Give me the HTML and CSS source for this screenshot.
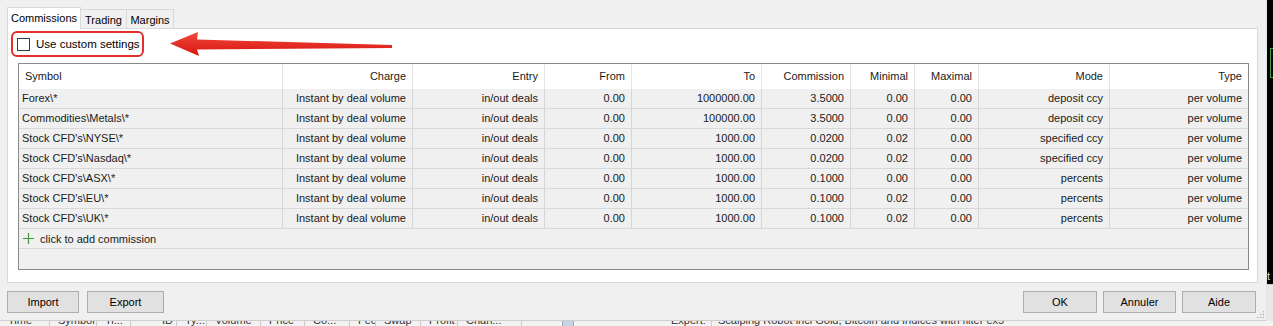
FILE: index.html
```html
<!DOCTYPE html>
<html>
<head>
<meta charset="utf-8">
<link rel="stylesheet" href="styles.css">
</head>
<body>
<div class="screen">
  <div class="top">
    <div class="dialog">
      <div class="tabs">
        <div class="tab tab-active w-comm">Commissions</div>
        <div class="tab w-trad">Trading</div>
        <div class="tab w-marg">Margins</div>
      </div>
      <div class="panel">
        <div class="opt-row">
          <label class="highlight">
            <span class="checkbox"></span>
            <span class="opt-label">Use custom settings</span>
          </label>
          <svg class="arrow" width="226" height="28" viewBox="0 0 226 28">
            <defs>
              <linearGradient id="ag" x1="0" y1="0" x2="0" y2="1">
                <stop offset="0" stop-color="#f04a3e"/>
                <stop offset="1" stop-color="#d9140e"/>
              </linearGradient>
            </defs>
            <polygon points="2,13.5 30,2 29,9.5 224,15 224,18 29,19.5 31,26" fill="url(#ag)"/>
          </svg>
        </div>
        <div class="grid">
          <div class="row head">
            <div class="c l hp">Symbol</div>
            <div class="c">Charge</div>
            <div class="c">Entry</div>
            <div class="c">From</div>
            <div class="c">To</div>
            <div class="c">Commission</div>
            <div class="c">Minimal</div>
            <div class="c">Maximal</div>
            <div class="c">Mode</div>
            <div class="c">Type</div>
          </div>
          <div class="row">
            <div class="c l">Forex\*</div><div class="c">Instant by deal volume</div><div class="c">in/out deals</div><div class="c">0.00</div><div class="c">1000000.00</div><div class="c">3.5000</div><div class="c">0.00</div><div class="c">0.00</div><div class="c">deposit ccy</div><div class="c">per volume</div>
          </div>
          <div class="row">
            <div class="c l">Commodities\Metals\*</div><div class="c">Instant by deal volume</div><div class="c">in/out deals</div><div class="c">0.00</div><div class="c">100000.00</div><div class="c">3.5000</div><div class="c">0.00</div><div class="c">0.00</div><div class="c">deposit ccy</div><div class="c">per volume</div>
          </div>
          <div class="row">
            <div class="c l">Stock CFD's\NYSE\*</div><div class="c">Instant by deal volume</div><div class="c">in/out deals</div><div class="c">0.00</div><div class="c">1000.00</div><div class="c">0.0200</div><div class="c">0.02</div><div class="c">0.00</div><div class="c">specified ccy</div><div class="c">per volume</div>
          </div>
          <div class="row">
            <div class="c l">Stock CFD's\Nasdaq\*</div><div class="c">Instant by deal volume</div><div class="c">in/out deals</div><div class="c">0.00</div><div class="c">1000.00</div><div class="c">0.0200</div><div class="c">0.02</div><div class="c">0.00</div><div class="c">specified ccy</div><div class="c">per volume</div>
          </div>
          <div class="row">
            <div class="c l">Stock CFD's\ASX\*</div><div class="c">Instant by deal volume</div><div class="c">in/out deals</div><div class="c">0.00</div><div class="c">1000.00</div><div class="c">0.1000</div><div class="c">0.00</div><div class="c">0.00</div><div class="c">percents</div><div class="c">per volume</div>
          </div>
          <div class="row">
            <div class="c l">Stock CFD's\EU\*</div><div class="c">Instant by deal volume</div><div class="c">in/out deals</div><div class="c">0.00</div><div class="c">1000.00</div><div class="c">0.1000</div><div class="c">0.02</div><div class="c">0.00</div><div class="c">percents</div><div class="c">per volume</div>
          </div>
          <div class="row">
            <div class="c l">Stock CFD's\UK\*</div><div class="c">Instant by deal volume</div><div class="c">in/out deals</div><div class="c">0.00</div><div class="c">1000.00</div><div class="c">0.1000</div><div class="c">0.02</div><div class="c">0.00</div><div class="c">percents</div><div class="c">per volume</div>
          </div>
          <div class="add-row">
            <svg class="plus" width="11" height="11" viewBox="0 0 11 11"><path d="M5.5 0V11M0 5.5H11" stroke="#3f9a3f" stroke-width="1.2"/></svg>
            <span>click to add commission</span>
          </div>
          <div class="empty-row"></div>
        </div>
      </div>
      <div class="buttons">
        <div class="btn-group">
          <div class="btn w-imp">Import</div>
          <div class="btn w-exp">Export</div>
        </div>
        <div class="btn-group right">
          <div class="btn w-ok">OK</div>
          <div class="btn w-ann">Annuler</div>
          <div class="btn w-aide">Aide</div>
        </div>
      </div>
      <div class="grip"></div>
    </div>
    <div class="side">
      <div class="side-dark">
        <div class="side-green"></div>
        <div class="side-text">t</div>
      </div>
      <div class="side-light"></div>
    </div>
  </div>
  <div class="under">
    <div class="under-line">
      <span class="u" style="width:50px">Time</span>
      <span class="u" style="width:47px">Symbol</span>
      <span class="u" style="width:34px">Ti...</span>
      <span class="u ur" style="width:46px">ID</span>
      <span class="u" style="width:30px">Ty...</span>
      <span class="u" style="width:54px">Volume</span>
      <span class="u" style="width:44px">Price</span>
      <span class="u" style="width:45px">Co...</span>
      <span class="u" style="width:26px">Fee</span>
      <span class="u" style="width:45px">Swap</span>
      <span class="u" style="width:37px">Profit</span>
      <span class="u" style="width:64px">Chan...</span>
      <span class="u-scroll"></span>
      <span class="u-expert">Expert:</span>
      <span class="u-name">Scalping Robot incl Gold, Bitcoin and Indices with filter ex5</span>
    </div>
  </div>
</div>
</body>
</html>
```

FILE: styles.css
```css
html, body {
  margin: 0;
  padding: 0;
}
body {
  width: 1273px;
  height: 326px;
  overflow: hidden;
  background: #f0f0f0;
  font-family: "Liberation Sans", Arial, sans-serif;
  font-size: 11px;
  color: #1a1a1a;
}
.screen {
  display: flex;
  flex-direction: column;
  height: 326px;
}
.top {
  display: flex;
  height: 321px;
}
.dialog {
  position: relative;
  width: 1267px;
  height: 321px;
  box-sizing: border-box;
  padding: 7px 0 0 7px;
  background: #f0f0f0;
  border-right: 1px solid #e4e4e4;
  border-bottom: 1px solid #cfcfcf;
  display: flex;
  flex-direction: column;
}

/* tabs */
.tabs {
  display: flex;
  align-items: flex-end;
  height: 21px;
  position: relative;
  z-index: 2;
}
.tab {
  box-sizing: border-box;
  height: 19px;
  border: 1px solid #d9d9d9;
  border-bottom: none;
  background: #f0f0f0;
  display: flex;
  align-items: center;
  justify-content: center;
  font-size: 11px;
  color: #000;
  padding-top: 1px;
  white-space: nowrap;
}
.tab + .tab {
  border-left: none;
}
.tab-active {
  height: 22px;
  margin-bottom: -1px;
  background: #fff;
  padding-top: 0;
  padding-bottom: 2px;
}
.w-comm { width: 74px; }
.w-trad { width: 46px; }
.w-marg { width: 47px; }

/* panel */
.panel {
  box-sizing: border-box;
  width: 1251px;
  height: 255px;
  background: #fff;
  border: 1px solid #d9d9d9;
  padding: 2px 0 0 3px;
}
.opt-row {
  display: flex;
  align-items: flex-start;
}
.highlight {
  box-sizing: border-box;
  flex: 0 0 133px;
  width: 133px;
  height: 26px;
  border: 2px solid #e0322b;
  border-radius: 6px;
  display: flex;
  align-items: center;
  padding-left: 4px;
  white-space: nowrap;
}
.checkbox {
  box-sizing: border-box;
  flex: 0 0 13px;
  width: 13px;
  height: 13px;
  border: 1px solid #2d3f4c;
  background: #fff;
  margin-right: 6px;
}
.opt-label {
  font-size: 11.5px;
  color: #000;
  white-space: nowrap;
}
.arrow {
  display: block;
  flex: 0 0 auto;
  margin-left: 24px;
  margin-top: -1px;
}

/* grid */
.grid {
  box-sizing: border-box;
  width: 1231px;
  height: 207px;
  margin: 5px 0 0 7px;
  border: 1px solid #8a8a8a;
  background: #f0f0f0;
  display: flex;
  flex-direction: column;
}
.row {
  display: grid;
  grid-template-columns: 264px 130px 132px 87px 130px 89px 64px 64px 131px 138px;
  height: 20px;
  box-sizing: border-box;
  border-bottom: 1px solid #d9d9d9;
}
.row.head {
  height: 25px;
  background: #fff;
  border-bottom: none;
}
.c {
  box-sizing: border-box;
  border-right: 1px solid #d6d6d6;
  padding: 0 6px 0 3px;
  text-align: right;
  line-height: 19px;
  white-space: nowrap;
  overflow: hidden;
}
.c:last-child {
  border-right: none;
}
.head .c {
  line-height: 24px;
  border-right-color: #e6e6e6;
}
.c.l {
  text-align: left;
}
.c.hp {
  padding-left: 6px;
}
.add-row {
  height: 20px;
  box-sizing: border-box;
  border-bottom: 1px solid #d9d9d9;
  display: flex;
  align-items: center;
  padding-left: 4px;
}
.plus {
  display: block;
  margin-right: 6px;
}
.empty-row {
  flex: 1;
}

/* buttons */
.buttons {
  display: flex;
  justify-content: space-between;
  margin-top: 8px;
  width: 1249px;
}
.btn-group {
  display: flex;
  gap: 8px;
}
.btn-group.right {
  gap: 6px;
}
.btn {
  box-sizing: border-box;
  height: 22px;
  background: #e1e1e1;
  border: 1px solid #adadad;
  display: flex;
  align-items: center;
  justify-content: center;
  font-size: 11px;
  color: #000;
}
.w-imp { width: 72px; }
.w-exp { width: 77px; }
.w-ok { width: 74px; }
.w-ann { width: 73px; }
.w-aide { width: 74px; }

.grip {
  position: absolute;
  right: 2px;
  bottom: 2px;
  width: 8px;
  height: 8px;
  background-image: radial-gradient(circle, #b5b5b5 0.8px, transparent 1.1px);
  background-size: 3px 3px;
  clip-path: polygon(100% 0, 100% 100%, 0 100%);
}

/* right side dark strip */
.side {
  width: 6px;
  display: flex;
  flex-direction: column;
}
.side-dark {
  height: 284px;
  background: #000;
  position: relative;
  overflow: hidden;
  display: flex;
  flex-direction: column;
}
.side-green {
  margin-top: 48px;
  height: 30px;
  width: 6px;
  box-sizing: border-box;
  border-left: 1px solid #3fa040;
  border-top: 1px solid #3fa040;
  border-bottom: 1px solid #3fa040;
  margin-left: 3px;
}
.side-text {
  margin-top: auto;
  margin-bottom: 2px;
  color: #ddd;
  font-size: 11px;
  line-height: 12px;
}
.side-light {
  flex: 1;
  background: #e9e9e9;
  border-top: 1px solid #cfcfcf;
}

/* window underneath */
.under {
  height: 5px;
  overflow: hidden;
  background: #f3f3f3;
}
.under-line {
  display: flex;
  margin-top: -7px;
  height: 13px;
  line-height: 13px;
  font-size: 11px;
  color: #333;
  white-space: nowrap;
}
.u {
  box-sizing: border-box;
  border-right: 1px solid #cdcdcd;
  padding-left: 8px;
  overflow: hidden;
}
.ur {
  text-align: right;
  padding-right: 3px;
}
.u-scroll {
  width: 10px;
  margin-left: 40px;
  background: #c8d3e6;
  border: 1px solid #9aa8c0;
}
.u-expert {
  margin-left: 97px;
  width: 40px;
  border-right: 1px solid #cdcdcd;
}
.u-name {
  padding-left: 6px;
}
```
